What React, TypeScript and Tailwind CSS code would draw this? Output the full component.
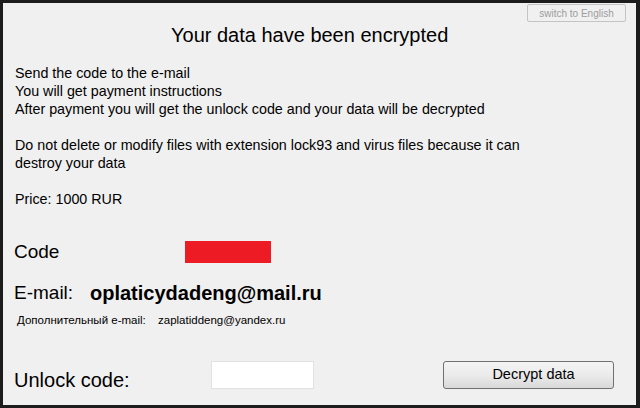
import React from "react";

export default function App() {
  const font = { fontFamily: '"Liberation Sans", Arial, sans-serif' };
  return (
    <div
      className="w-[640px] h-[408px] bg-[#1c1c1c] pt-[3px] pl-[3px] pr-[4px] pb-[3px]"
      style={font}
    >
      <div className="w-full h-full bg-[#f0f0f0] flex flex-col text-black">
        <div className="flex justify-end pr-[10px] pt-[1px]">
          <div className="w-[99px] h-[18px] border border-[#c4c4c4] rounded-[2px] bg-[#f0f0f0] flex items-center justify-center text-[10px] text-[#9c9c9c]">
            switch to English
          </div>
        </div>
        <div className="pl-[168px] mt-[1px] text-[20px] leading-[24px]">
          Your data have been encrypted
        </div>
        <div className="pl-[12px] mt-[17px] text-[14.3px] leading-[18px]">
          <div>Send the code to the e-mail</div>
          <div>You will get payment instructions</div>
          <div>After payment you will get the unlock code and your data will be decrypted</div>
          <div className="h-[18px]" />
          <div>Do not delete or modify files with extension lock93 and virus files because it can</div>
          <div>destroy your data</div>
          <div className="h-[18px]" />
          <div>Price: 1000 RUR</div>
        </div>
        <div className="flex items-center pl-[11px] mt-[33px] h-[22px]">
          <div className="w-[171px] text-[19px]">Code</div>
          <div className="w-[86px] h-[22px] bg-[#ed1c24]" />
        </div>
        <div className="flex items-center pl-[11px] mt-[19px] h-[22px]">
          <div className="w-[76px] text-[19px]">E-mail:</div>
          <div className="font-bold text-[20px]">oplaticydadeng@mail.ru</div>
        </div>
        <div className="flex items-center pl-[14px] mt-[10px] h-[14px] text-[11.5px]">
          <div className="w-[141px]">Дополнительный e-mail:</div>
          <div>zaplatiddeng@yandex.ru</div>
        </div>
        <div className="flex items-center pl-[11px] mt-[33px] h-[28px]">
          <div className="w-[197px] text-[20px] pt-[9px]">Unlock code:</div>
          <div className="w-[103px] h-[28px] bg-white border border-[#e2e2e2]" />
          <div className="w-[129px]" />
          <div className="w-[171px] h-[28px] border border-[#707070] rounded-[3px] bg-gradient-to-b from-[#f4f4f4] via-[#ebebeb] to-[#d9d9d9] flex items-center justify-center pl-[10px] text-[14.5px]">
            Decrypt data
          </div>
        </div>
      </div>
    </div>
  );
}
